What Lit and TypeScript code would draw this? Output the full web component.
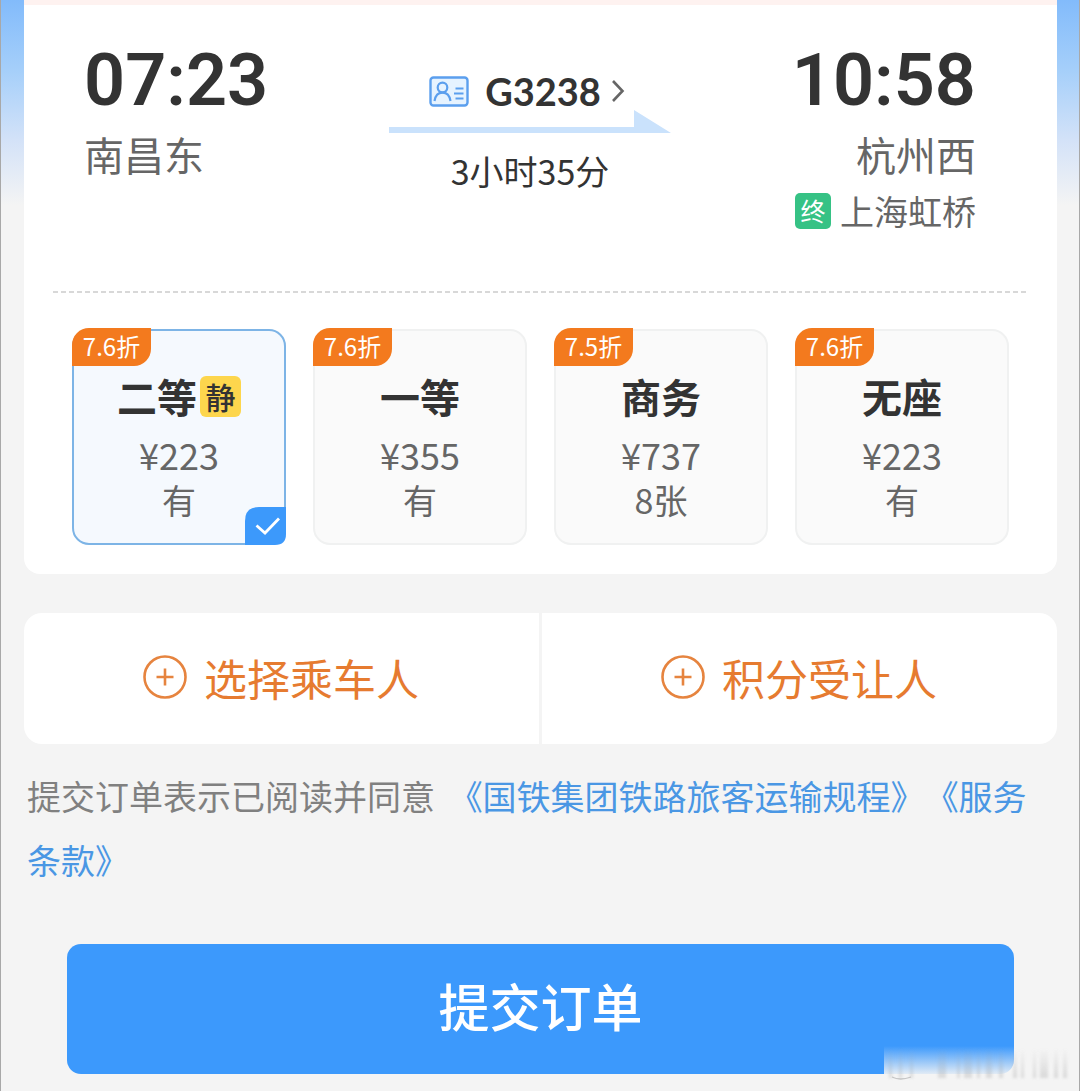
import { LitElement, html, css, svg, nothing } from "lit";
import { customElement, property, state } from "lit/decorators.js";
import { classMap } from "lit/directives/class-map.js";

interface Seat {
  id: string;
  name: string;
  price: string;
  left: string;
  discount: string;
  quiet?: boolean;
}

const SEATS: Seat[] = [
  { id: "second", name: "二等", price: "¥223", left: "有", discount: "7.6折", quiet: true },
  { id: "first", name: "一等", price: "¥355", left: "有", discount: "7.6折" },
  { id: "business", name: "商务", price: "¥737", left: "8张", discount: "7.5折" },
  { id: "standing", name: "无座", price: "¥223", left: "有", discount: "7.6折" },
];

const idCardIcon = svg`
  <rect x="1.5" y="1.5" width="37" height="28" rx="3" fill="#e6f3ff" stroke="#5b9fee" stroke-width="2.4"/>
  <circle cx="13.5" cy="11.5" r="4.8" fill="none" stroke="#5b9fee" stroke-width="2.2"/>
  <path d="M5.5 25C6.4 19.5 9 16.7 13.5 16.7S20.6 19.5 21.5 25" fill="none" stroke="#5b9fee" stroke-width="2.2"/>
  <path d="M26.5 12.5H34.5M25 17.5H34.5M26.5 22.5H34.5" fill="none" stroke="#5b9fee" stroke-width="2"/>`;

@customElement("trip-summary")
export class TripSummary extends LitElement {
  static styles = css`
    :host {
      display: block;
    }
    .trip {
      display: grid;
      grid-template-columns: 1fr 282px 1fr;
      padding: 36px 81px 57px 60px;
    }
    .end {
      display: flex;
      flex-direction: column;
      align-items: flex-end;
    }
    .time {
      font: 600 72px/80px Roboto, sans-serif;
      color: #333;
    }
    .station {
      font-size: 40px;
      line-height: 66px;
      color: #666;
    }
    .terminal {
      display: flex;
      align-items: center;
      gap: 9px;
      font-size: 34px;
      line-height: 47px;
      color: #666;
    }
    .tag {
      width: 36px;
      height: 36px;
      border-radius: 5px;
      background: #36c285;
      color: #fff;
      font-size: 25px;
      line-height: 34px;
      text-align: center;
    }
    .middle {
      display: flex;
      flex-direction: column;
      align-items: center;
      padding-top: 31px;
    }
    .train {
      display: flex;
      align-items: center;
      height: 38px;
      padding: 0 6px 0 0;
      border: 0;
      background: none;
      color: #333;
      font: 700 38px/38px Lato, sans-serif;
      cursor: pointer;
    }
    .card-icon {
      width: 40px;
      height: 31px;
      margin-right: 16px;
    }
    .chevron {
      width: 14px;
      height: 24px;
      margin-left: 10px;
    }
    .arrow {
      width: 282px;
      height: 24px;
      flex: none;
    }
    .duration {
      font-size: 34px;
      line-height: 74px;
      color: #333;
    }
  `;

  render() {
    return html`
      <section class="trip">
        <div>
          <div class="time">07:23</div>
          <div class="station">南昌东</div>
        </div>
        <div class="middle">
          <button class="train" type="button">
            <svg class="card-icon" viewBox="0 0 40 31" aria-hidden="true">${idCardIcon}</svg>
            G3238
            <svg class="chevron" viewBox="0 0 14 24" aria-hidden="true">
              <path d="M2 2L11.5 12L2 22" fill="none" stroke="#666" stroke-width="2.6"/>
            </svg>
          </button>
          <svg class="arrow" viewBox="0 0 282 24" aria-hidden="true">
            <path d="M0 17H245V0L282 23H0Z" fill="#cae2fc"/>
          </svg>
          <div class="duration">3小时35分</div>
        </div>
        <div class="end">
          <div class="time">10:58</div>
          <div class="station">杭州西</div>
          <div class="terminal"><span class="tag">终</span><span>上海虹桥</span></div>
        </div>
      </section>
    `;
  }
}

@customElement("seat-picker")
export class SeatPicker extends LitElement {
  @property({ attribute: false }) seats: Seat[] = [];
  @state() private selected = "second";

  static styles = css`
    :host {
      display: block;
    }
    .seats {
      display: grid;
      grid-template-columns: repeat(4, 1fr);
      gap: 27px;
      margin: 0;
      padding: 36px 48px 29px;
      border: 0;
    }
    .seat {
      position: relative;
      display: flex;
      flex-direction: column;
      align-items: center;
      padding: 37px 0 21px;
      border: 2px solid #f0f1f1;
      border-radius: 17px;
      background: #fafafa;
      color: #666;
      cursor: pointer;
    }
    .seat.on {
      border-color: #7db4e6;
      background: #f5f9fe;
    }
    .radio {
      position: absolute;
      inset: 0;
      margin: 0;
      opacity: 0;
    }
    .discount {
      position: absolute;
      top: -3px;
      left: -2px;
      width: 79px;
      height: 38px;
      border-radius: 17px 0 17px 0;
      background: #f37a1e;
      color: #fff;
      font-size: 24px;
      line-height: 36px;
      text-align: center;
    }
    .name {
      display: flex;
      align-items: center;
      gap: 3px;
      height: 56px;
      margin-bottom: 8px;
      color: #333;
      font-size: 40px;
      line-height: 56px;
      font-weight: 700;
    }
    .quiet {
      width: 41px;
      height: 41px;
      border-radius: 6px;
      background: #fdd64d;
      font-size: 30px;
      line-height: 40px;
      font-weight: 500;
      text-align: center;
    }
    .line {
      font-size: 36px;
      line-height: 45px;
    }
    .count {
      font-size: 34px;
      line-height: 45px;
    }
    .check {
      position: absolute;
      right: -2px;
      bottom: -2px;
      width: 41px;
      height: 38px;
    }
  `;

  render() {
    return html`
      <fieldset class="seats" aria-label="席别">
        ${this.seats.map((s) => {
          const on = s.id === this.selected;
          return html`
            <label class=${classMap({ seat: true, on })}>
              <input class="radio" type="radio" name="seat" .checked=${on}
                @change=${() => (this.selected = s.id)} />
              <span class="discount">${s.discount}</span>
              <span class="name">${s.name}${s.quiet ? html`<span class="quiet">静</span>` : nothing}</span>
              <span class="line">${s.price}</span>
              <span class="count">${s.left}</span>
              ${on
                ? html`<svg class="check" viewBox="0 0 41 38" aria-hidden="true">
                    <path d="M0 38V14Q0 0 14 0H41V27Q41 38 30 38Z" fill="#3c99fb"/>
                    <path d="M11.5 18.5L20 26L34 11.5" fill="none" stroke="#fff" stroke-width="2.8"/>
                  </svg>`
                : nothing}
            </label>
          `;
        })}
      </fieldset>
    `;
  }
}

@customElement("app-root")
export class AppRoot extends LitElement {
  static styles = css`
    :host {
      display: block;
      font-family: "Noto Sans CJK SC", sans-serif;
    }
    .page {
      position: relative;
      box-sizing: border-box;
      min-height: 100vh;
      padding: 0 22px 17px 23px;
      border-left: 1px solid #a8a8a8;
      border-right: 1px solid #a8a8a8;
      background: linear-gradient(#82bbfb 0, #a5cffa 70px, #d3e2f8 140px, #f4f4f4 205px) #f4f4f4;
      overflow: hidden;
    }
    .ticket {
      border-top: 5px solid #fef2f0;
      border-radius: 0 0 16px 16px;
      background: #fff;
    }
    .rule {
      height: 2px;
      margin: 0 29px;
      background: repeating-linear-gradient(90deg, #d8d8d8 0 5px, transparent 5px 8px);
    }
    .people {
      display: grid;
      grid-template-columns: 1fr 1fr;
      gap: 3px;
      margin-top: 39px;
      border-radius: 18px;
      overflow: hidden;
    }
    .add {
      display: flex;
      align-items: center;
      justify-content: center;
      gap: 17px;
      height: 131px;
      padding: 0 1px 4px 0;
      border: 0;
      background: #fff;
      color: #e67b30;
      font: 400 43px/64px "Noto Sans CJK SC", sans-serif;
      cursor: pointer;
    }
    .plus {
      width: 44px;
      height: 44px;
    }
    .terms {
      margin: 20px 24px 0 3px;
      color: #808080;
      font-size: 34px;
      line-height: 64px;
      word-break: break-all;
      line-break: anywhere;
      text-spacing-trim: space-all;
    }
    .intro {
      margin-right: 6px;
    }
    .link {
      color: #4a97e4;
      text-decoration: none;
    }
    .submit {
      display: block;
      width: calc(100% - 86px);
      height: 130px;
      margin: 52px 43px 0;
      padding: 0 0 8px;
      border: 0;
      border-radius: 14px;
      background: #3c99fc;
      color: #fff;
      font: 500 51px/76px "Noto Sans CJK SC", sans-serif;
      cursor: pointer;
    }
    .smudge {
      position: absolute;
      right: 8px;
      bottom: 8px;
      width: 187px;
      height: 37px;
    }
  `;

  private addButton(label: string) {
    return html`
      <button class="add" type="button">
        <svg class="plus" viewBox="0 0 44 44" aria-hidden="true">
          <circle cx="22" cy="22" r="20.5" fill="none" stroke="#e6843f" stroke-width="2.6"/>
          <path d="M13.5 22H30.5M22 13.5V30.5" stroke="#e6843f" stroke-width="2.6"/>
        </svg>
        ${label}
      </button>
    `;
  }

  render() {
    return html`
      <main class="page">
        <div class="ticket">
          <trip-summary></trip-summary>
          <div class="rule"></div>
          <seat-picker .seats=${SEATS}></seat-picker>
        </div>
        <div class="people">${this.addButton("选择乘车人")}${this.addButton("积分受让人")}</div>
        <p class="terms"><span class="intro">提交订单表示已阅读并同意</span> <a class="link" href="#rules">《国铁集团铁路旅客运输规程》</a><a class="link" href="#service">《服务条款》</a></p>
        <button class="submit" type="button">提交订单</button>
        <svg class="smudge" viewBox="0 0 187 37" aria-hidden="true">
          <defs>
            <linearGradient id="fade" x1="0" y1="0" x2="0" y2="1">
              <stop offset="0" stop-color="#f4f4f4" stop-opacity="0"/>
              <stop offset="0.8" stop-color="#f4f4f4" stop-opacity="0.95"/>
            </linearGradient>
            <linearGradient id="ink" x1="0" y1="0" x2="0" y2="1">
              <stop offset="0" stop-color="#999" stop-opacity="0"/>
              <stop offset="1" stop-color="#999" stop-opacity="0.3"/>
            </linearGradient>
            <filter id="soft" x="-5%" y="-10%" width="110%" height="120%">
              <feGaussianBlur stdDeviation="1.6"/>
            </filter>
          </defs>
          <rect width="187" height="37" fill="url(#fade)"/>
          <g fill="url(#ink)" filter="url(#soft)">
            <path d="M5 4h3v28h-3zM15 2h3v30h-3zM26 4h3v28h-3zM54 4h8v28h-8zM73 4h3v28h-3zM80 4h8v28h-8zM93 4h3v28h-3zM102 4h6v28h-6zM115 4h4v28h-4zM129 4h4v28h-4zM137 4h3v28h-3zM149 4h3v28h-3zM156 4h8v28h-8zM170 4h4v28h-4zM179 4h4v28h-4z"/>
          </g>
          <path d="M8 31Q16 35 27 31" fill="none" stroke="#999" stroke-opacity="0.5" stroke-width="1.3"/>
        </svg>
      </main>
    `;
  }
}
